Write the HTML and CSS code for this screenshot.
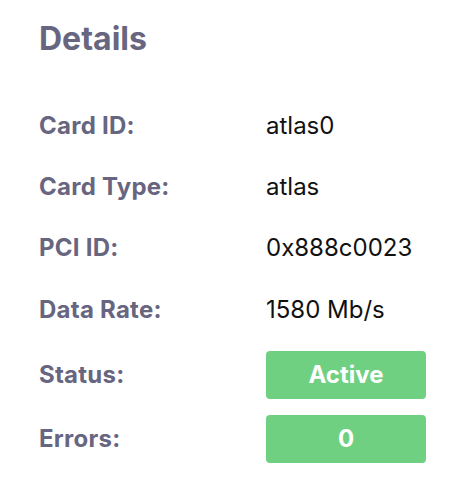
FILE: index.html
```html
<!DOCTYPE html>
<html>
<head>
<meta charset="utf-8">
<link rel="stylesheet" href="styles.css">
</head>
<body>
<div class="panel">
  <h1 class="title">Details</h1>
  <div class="grid">
    <div class="label">Card ID:</div><div class="value">atlas0</div>
    <div class="label">Card Type:</div><div class="value">atlas</div>
    <div class="label">PCI ID:</div><div class="value">0x888c0023</div>
    <div class="label">Data Rate:</div><div class="value">1580 Mb/s</div>
    <div class="label">Status:</div><div class="value"><span class="badge">Active</span></div>
    <div class="label">Errors:</div><div class="value"><span class="badge">0</span></div>
  </div>
</div>
</body>
</html>
```
FILE: styles.css
```css
html, body { margin: 0; padding: 0; background: #ffffff; }
body { font-family: Inter, "Noto Sans", sans-serif; }
.panel { padding: 19px 0 0 39px; }
.title {
  margin: 0;
  font-size: 32px;
  font-weight: 700;
  color: #676580;
  line-height: 40px;
}
.grid {
  margin-top: 44px;
  display: grid;
  grid-template-columns: 227px 160px;
  grid-template-rows: 45px 45px 45px 48px 49px 48px;
  row-gap: 16px;
  align-items: center;
}
.label {
  font-size: 24px;
  line-height: 30px;
  font-weight: 700;
  color: #676580;
  letter-spacing: 0.25px;
}
.value {
  font-size: 24px;
  line-height: 30px;
  color: #111111;
}
.badge {
  display: flex;
  align-items: center;
  justify-content: center;
  height: 48px;
  background: #70d081;
  color: #ffffff;
  font-weight: 700;
  font-size: 24px;
  border-radius: 4px;
}
```
